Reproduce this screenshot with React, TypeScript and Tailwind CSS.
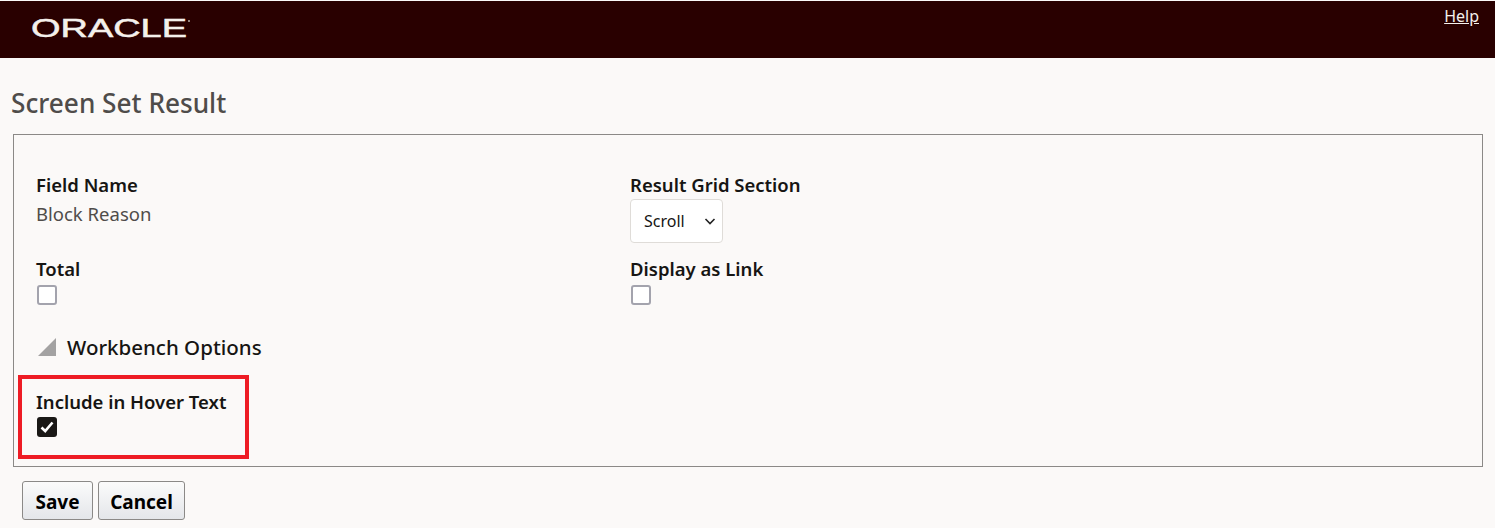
import React from 'react';

const font = "[font-family:'Noto_Sans',sans-serif]";

const Checkbox = ({ checked }: { checked?: boolean }) =>
  checked ? (
    <span className="ml-px flex h-5 w-5 items-center justify-center rounded-[3px] bg-[#1a1816]">
      <svg width="16" height="16" viewBox="0 0 16 16" fill="none">
        <path d="M2.5 8.5 L6.2 12 L13.5 3.5" stroke="#fff" strokeWidth="2.6" />
      </svg>
    </span>
  ) : (
    <span className="ml-px block h-5 w-5 rounded-[3px] border-[2.5px] border-[#a3a3ad] bg-white" />
  );

const Label = ({ children }: { children: React.ReactNode }) => (
  <div className="h-[26px] text-[18.5px] leading-[26px] font-semibold text-[#161513]">{children}</div>
);

const App: React.FC = () => {
  return (
    <div className={`${font} h-[528px] w-[1495px] overflow-hidden bg-[#fbf9f8]`}>
      <header className="mt-px flex h-[57px] items-start justify-between bg-[#290000]">
        <svg width="170" height="30" viewBox="0 0 170 30" className="mt-[11px] ml-[30px]">
          <text
            x="1"
            y="25"
            textLength="156"
            lengthAdjust="spacingAndGlyphs"
            fill="#f4f0ec"
            stroke="#f4f0ec"
            strokeWidth="0.5"
            fontFamily="'Liberation Sans', sans-serif"
            fontSize="25"
          >
            ORACLE
          </text>
          <circle cx="159" cy="9" r="1" fill="#b9b0aa" />
        </svg>
        <a href="#" className="mt-[4px] mr-[16px] text-[16px] leading-[22px] text-[#f4f0ec] underline">
          Help
        </a>
      </header>

      <h1 className="mt-[27px] ml-[11px] h-[36px] text-[26.2px] leading-[36px] font-medium text-[#4f4c4a]">
        Screen Set Result
      </h1>

      <section className="mt-[13px] ml-[13px] h-[333px] w-[1470px] border border-[#8b8987] pt-[37px]">
        <div className="flex">
          <div className="w-[616px] pl-[22px]">
            <Label>Field Name</Label>
            <div className="mt-[3px] h-[26px] text-[18.5px] leading-[26px] text-[#4f4c4a]">Block Reason</div>
          </div>
          <div>
            <Label>Result Grid Section</Label>
            <div className="mt-[1px] flex h-[44px] w-[93px] items-center justify-between rounded-[4px] border border-[#dfdcd8] bg-white pr-[5px] pl-[13px] text-[16px] text-[#161513]">
              <span>Scroll</span>
              <svg width="14" height="14" viewBox="0 0 14 14" fill="none">
                <path d="M2.5 5 L7 9.5 L11.5 5" stroke="#222" strokeWidth="1.6" />
              </svg>
            </div>
          </div>
        </div>

        <div className="mt-[13px] flex">
          <div className="w-[616px] pl-[22px]">
            <Label>Total</Label>
            <div className="mt-[3px]"><Checkbox /></div>
          </div>
          <div>
            <Label>Display as Link</Label>
            <div className="mt-[3px]"><Checkbox /></div>
          </div>
        </div>

        <div className="mt-[27px] flex h-[30px] items-center pl-[24px]">
          <svg width="18" height="18" viewBox="0 0 18 18">
            <polygon points="0,18 18,0 18,18" fill="#a3a2a2" />
          </svg>
          <span className="ml-[11px] text-[20.5px] leading-[30px] font-medium text-[#161513]">Workbench Options</span>
        </div>

        <div className="mt-[13px] ml-[4px] h-[84px] w-[231px] border-4 border-[#ee1c25] pt-[10px] pl-[14px]">
          <Label>Include in Hover Text</Label>
          <div className="mt-[2px]"><Checkbox checked /></div>
        </div>
      </section>

      <div className="mt-[14px] ml-[22px] flex gap-[5px]">
        <button className="h-[39px] w-[71px] rounded-[3px] border border-[#8b8987] bg-gradient-to-b from-[#fbfbfb] to-[#e4e6ea] pt-[3px] text-[19px] leading-[28px] font-bold text-black">
          Save
        </button>
        <button className="h-[39px] w-[87px] rounded-[3px] border border-[#8b8987] bg-gradient-to-b from-[#fbfbfb] to-[#e4e6ea] pt-[3px] text-[19px] leading-[28px] font-bold text-black">
          Cancel
        </button>
      </div>
    </div>
  );
};

export default App;
